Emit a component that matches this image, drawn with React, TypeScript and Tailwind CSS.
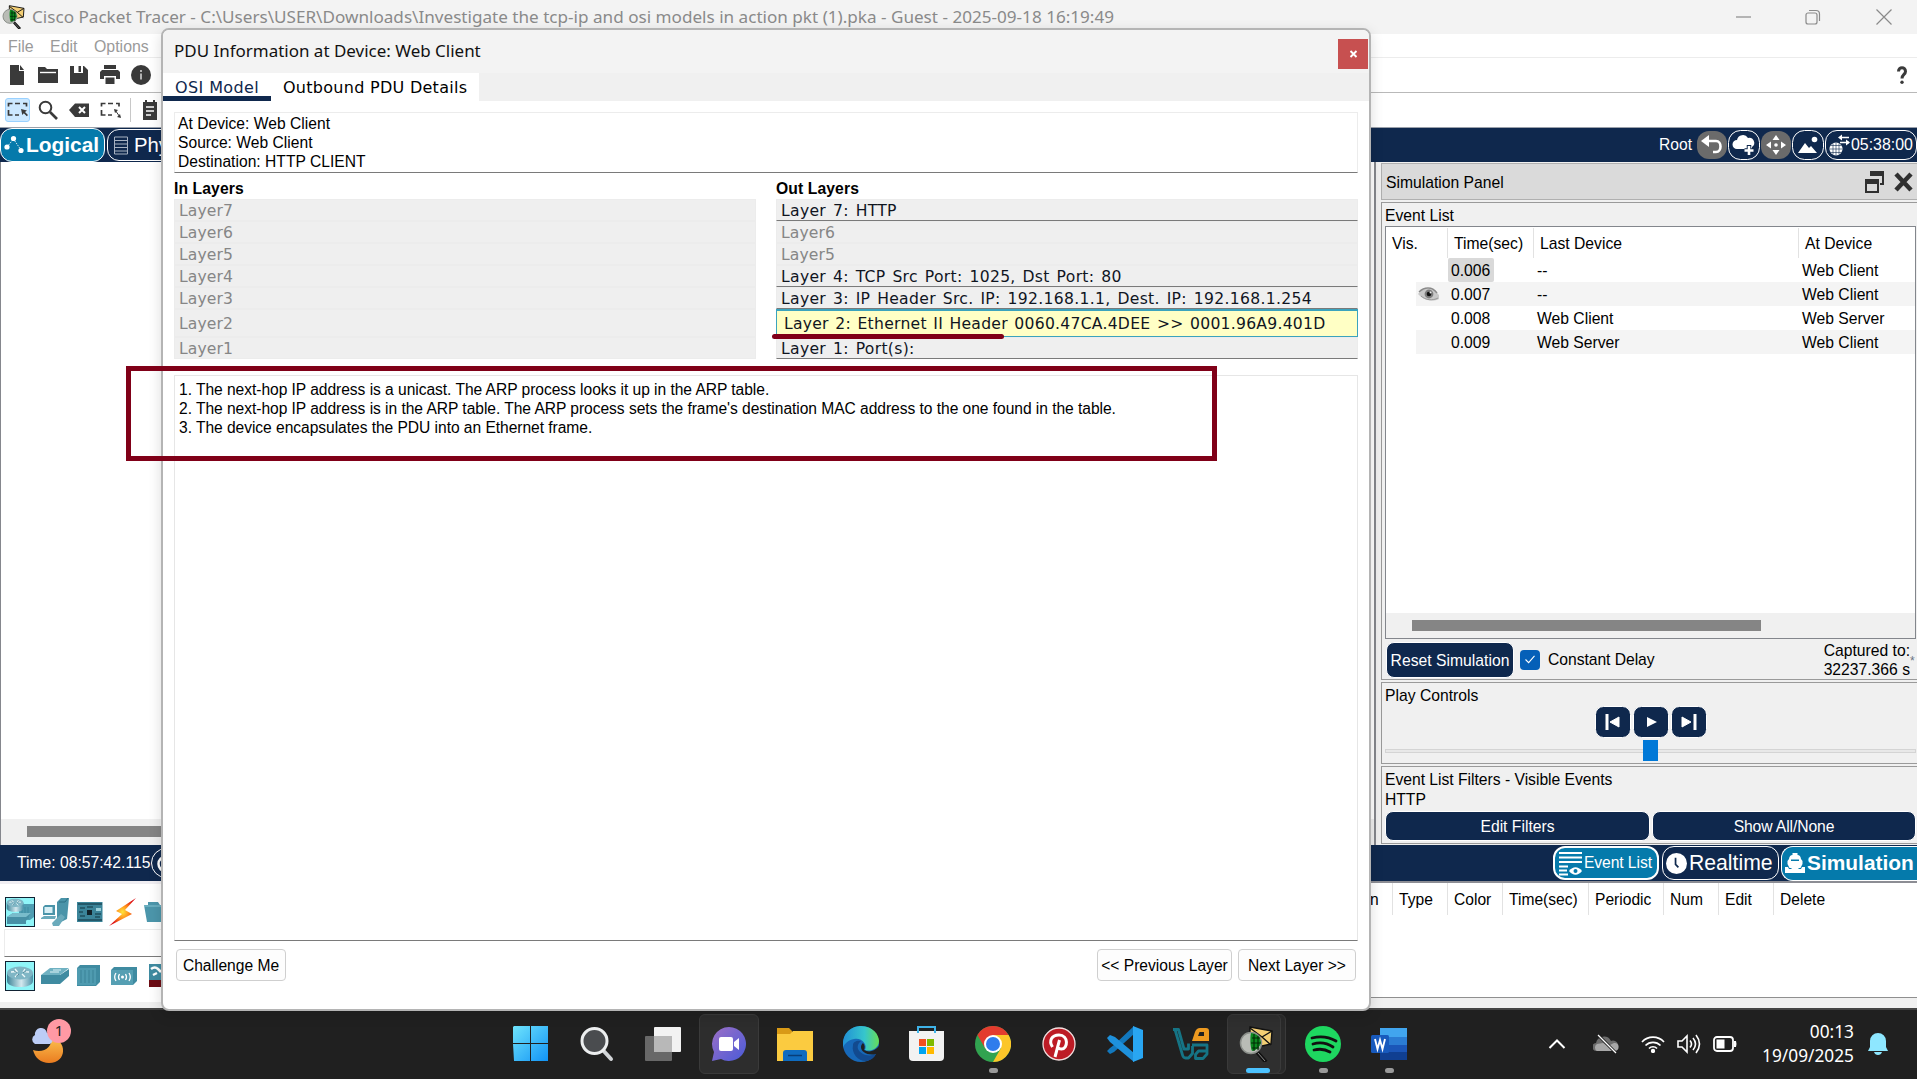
import React from "react";

type P = { className?: string };

const PacketTracerIcon = ({ className }: P) => (
  <svg viewBox="0 0 36 36" className={className}>
    <path d="M11 1l22 4-1 13-9 2-12-8z" fill="#f4cf74" stroke="#111" strokeWidth="1.4" />
    <path d="M11 2l12 9 10-6M23 11l9 8" fill="none" stroke="#111" strokeWidth="1.4" />
    <path d="M18 26l9 10" stroke="#111" strokeWidth="4" />
    <path d="M19 27l7 8" stroke="#8a8a8a" strokeWidth="1" />
    <circle cx="12" cy="17" r="10.5" fill="#b9bcb6" stroke="#8b8f8a" strokeWidth="1.5" />
    <path d="M12 7a10 10 0 0 1 10 9 10 10 0 0 1-9 9c-2-4-2-14-1-18z" fill="#0c8a20" />
    <path d="M13 12h8M12 17h10M13 22h7M15 8v17M19 10v14" stroke="#012a05" strokeWidth="1.1" />
  </svg>
);

const NewFile = () => (
  <svg viewBox="0 0 20 20" className="h-5 w-5"><path d="M3 0h9v6h5v14H3zM13 0l4 5h-4z" fill="#3a3a3a" /></svg>
);
const OpenFile = () => (
  <svg viewBox="0 0 20 20" className="h-5 w-5"><path d="M0 2h7l2 2h11v14H0z" fill="#3a3a3a" /><path d="M2 7.500h16" stroke="#fff" strokeWidth="1.4" /></svg>
);
const SaveFile = () => (
  <svg viewBox="0 0 20 20" className="h-5 w-5"><path d="M1 1h14l4 4v14H1z" fill="#3a3a3a" /><path d="M5 1h9v7H5z" fill="#fff" /><path d="M9.500 1h2.500v6H9.500z" fill="#3a3a3a" /></svg>
);
const PrintFile = () => (
  <svg viewBox="0 0 20 20" className="h-5 w-5"><path d="M4 0h12v4H4zM2 5h16l2 2v7h-4v-3H4v3H0V7zM5.500 12.500h9V19h-9z" fill="#3a3a3a" /></svg>
);
const InfoIcon = () => (
  <svg viewBox="0 0 20 20" className="h-5 w-5"><circle cx="10" cy="10" r="10" fill="#3a3a3a" /><path d="M10 5v2M10 8.500v6" stroke="#ddd" strokeWidth="1.500" /></svg>
);
const SelectIcon = () => (
  <svg viewBox="0 0 22 18" className="h-[18px] w-[22px]">
    <path d="M1.500 5.500V2.500h4M8 2.500h5M16 2.500h3.500v3M1.500 9v5h4M8 14h4" fill="none" stroke="#3a3a3a" strokeWidth="1.700" />
    <path d="M14 8l6 1.500-2 1.500 3 3-1.200 1.200-3-3-1.500 1.800z" fill="#3a3a3a" />
  </svg>
);
const ResizeIcon = () => (
  <svg viewBox="0 0 22 18" className="h-[18px] w-[22px]">
    <path d="M1.500 5.500V2.500h4M8 2.500h5M16 2.500h3v3M1.500 9v5h4M8 14h4" fill="none" stroke="#3a3a3a" strokeWidth="1.700" />
    <path d="M14 8l4 1-3 3zM21 17l-4-1 3-3z" fill="#3a3a3a" /><path d="M15 9l5 7" stroke="#3a3a3a" />
  </svg>
);
const MagnifierIcon = () => (
  <svg viewBox="0 0 20 20" className="h-5 w-5"><circle cx="7.500" cy="7.500" r="5.800" fill="none" stroke="#3a3a3a" strokeWidth="2" /><path d="M12 12l7 7" stroke="#3a3a3a" strokeWidth="2.600" /></svg>
);
const EraseIcon = () => (
  <svg viewBox="0 0 20 20" className="h-5 w-5"><path d="M0 10l6-6.500h14v13.500H6z" fill="#3a3a3a" /><path d="M10 7l6 6M16 7l-6 6" stroke="#fff" strokeWidth="2" /></svg>
);
const NoteIcon = () => (
  <svg viewBox="0 0 16 20" className="h-5 w-4"><path d="M1 2h2V0h2v2h6V0h2v2h2v18H1z" fill="#3a3a3a" /><path d="M4 7h8M4 11h8M4 15h5" stroke="#fff" strokeWidth="1.500" /></svg>
);

function AppHeader() {
  return (
    <>
      <header className="flex h-[34px] shrink-0 items-center bg-[#f3f3f3] pl-[2px]">
        <PacketTracerIcon className="h-[24px] w-[24px]" />
        <h1 className="-mt-px ml-[6px] text-[17.110px] text-[#8a8a8a]">
          Cisco Packet Tracer - C:\Users\USER\Downloads\Investigate the tcp-ip and osi models in action pkt (1).pka - Guest - 2025-09-18 16:19:49
        </h1>
        <svg viewBox="0 0 156 18" className="mr-[25px] ml-auto h-[18px] w-[156px] shrink-0" fill="none" stroke="#8a8a8a" strokeWidth="1.200">
          <path d="M0 9h15" />
          <rect x="70" y="5" width="11" height="11" rx="2" />
          <path d="M73 2.500h7a3.500 3.500 0 0 1 3.500 3.500v7M140.500 1.500l15 15M155.500 1.500l-15 15" />
        </svg>
      </header>
      <nav className="flex h-6 shrink-0 items-center gap-[16.500px] border-b border-[#ececec] bg-white pt-[2px] pl-2 font-['Liberation_Sans'] text-[15.900px] leading-none text-[#9a9a9a]">
        <span>File</span><span>Edit</span><span>Options</span>
      </nav>
      <div className="flex h-[35px] shrink-0 items-center gap-[11px] border-b border-[#b9b9b9] bg-white pl-[7px]">
        <NewFile /><OpenFile /><SaveFile /><PrintFile /><InfoIcon />
        <svg viewBox="0 0 10 18" className="mr-[10px] ml-auto h-[18px] w-[10px]"><path d="M1.500 5.500c0-5 7-5 7 0 0 3-3.500 3-3.500 7" fill="none" stroke="#3a3a3a" strokeWidth="3" /><circle cx="5" cy="16.200" r="1.700" fill="#3a3a3a" /></svg>
      </div>
      <div className="flex h-[34px] shrink-0 items-center bg-white pl-[5px]">
        <div className="flex h-6 w-[25px] items-center justify-center rounded-[3px] border border-[#99d1ff] bg-[#cce8ff]"><SelectIcon /></div>
        <div className="ml-2 flex items-center gap-[11px]"><MagnifierIcon /><EraseIcon /><ResizeIcon /></div>
        <div className="mr-[11px] ml-[8px] h-6 w-px bg-[#c8c8c8]" />
        <NoteIcon />
      </div>
    </>
  );
}

function WorkspaceBar() {
  return (
    <div className="flex h-[35px] shrink-0 items-center border-t border-[#9aa0aa] bg-[#0f284d] font-['Liberation_Sans'] text-white">
      <div className="flex h-[34px] w-[105px] shrink-0 items-center rounded-[12px] border border-white bg-[#057aab] pl-[3px] text-[20.900px] font-bold">
        <svg viewBox="0 0 20 20" className="mr-[2px] h-5 w-5" fill="#fff"><circle cx="3" cy="12" r="2.600" /><circle cx="9.500" cy="3.500" r="2.600" /><circle cx="17" cy="15.500" r="2.600" /><path d="M3 12L9.500 4l7.500 11" fill="none" stroke="#fff" strokeWidth=".8" strokeDasharray="1.500 1" /></svg>
        Logical
      </div>
      <div className="ml-[2px] flex h-[32px] w-[120px] shrink-0 items-center rounded-[12px] border border-white pl-[6px] text-[20.300px]">
        <svg viewBox="0 0 14 18" className="mr-[6px] h-[19px] w-[14px] shrink-0" fill="none" stroke="#a8b2c2"><path d="M.5.5h13v17H.5zM1 4h12M1 7.500h12M1 11h12M1 14.500h12" /></svg>
        Physical
      </div>
      <div className="ml-auto flex items-center text-base">
        <span className="mr-[5px] text-[15.600px]">Root</span>
        <svg viewBox="0 0 30 28" className="h-7 w-[30px]"><rect width="30" height="28" rx="12" fill="#6b6b6b" /><path d="M7 10h12c6 0 6 11 0 11h-3" fill="none" stroke="#fff" strokeWidth="2.600" /><path d="M4 10l8-6v12z" fill="#fff" /></svg>
        <svg viewBox="0 0 32 30" className="ml-px h-[30px] w-8"><rect x=".5" y=".5" width="31" height="29" rx="12" fill="none" stroke="#fff" /><path d="M9 19a4.500 4.500 0 0 1 0-9 6 6 0 0 1 11-2 5 5 0 0 1 4 9v2z" fill="#fff" /><path d="M21 15v11M16.500 20.500h9" stroke="#0f284d" strokeWidth="4.500" /><path d="M21 16v9M16.500 20.500h9" stroke="#fff" strokeWidth="2.600" /></svg>
        <svg viewBox="0 0 30 28" className="ml-px h-7 w-[30px]"><rect width="30" height="28" rx="12" fill="#6b6b6b" /><path d="M15 4l3.500 5h-7zM15 24l3.500-5h-7zM5 14l5-3.500v7zM25 14l-5-3.500v7z" fill="#fff" /><circle cx="15" cy="14" r="1.800" fill="#fff" /></svg>
        <svg viewBox="0 0 32 30" className="ml-px h-[30px] w-8"><rect x=".5" y=".5" width="31" height="29" rx="12" fill="none" stroke="#fff" /><path d="M6 23l7-10 4 5 2-2 6 7z" fill="#fff" /><circle cx="22.500" cy="9.500" r="2.800" fill="#fff" /></svg>
        <div className="ml-px flex h-[30px] w-[92px] items-center rounded-[12px] border border-white pl-[3px] text-[15.900px]">
          <svg viewBox="0 0 21 22" className="mr-px h-[22px] w-[21px] shrink-0"><circle cx="7" cy="15" r="6.500" fill="#fff" /><path d="M1 15h12M2 11.500h10M2 18.500h10M7 8.500v13M4 9.500v11M10 9.500v11" stroke="#0f284d" strokeWidth=".6" /><path d="M11 3.500h9M11 8.500h9" stroke="#fff" strokeWidth="1.500" /><path d="M9 3.500l4-3v6zM21 8.500l-4-3v6z" fill="#fff" /></svg>
          05:38:00
        </div>
      </div>
    </div>
  );
}

const EVENTS = [
  { time: "0.006", last: "--", at: "Web Client", current: true },
  { time: "0.007", last: "--", at: "Web Client", visible: true },
  { time: "0.008", last: "Web Client", at: "Web Server" },
  { time: "0.009", last: "Web Server", at: "Web Client" },
];

const EyeIcon = () => (
  <svg viewBox="0 0 21 14" className="h-[14px] w-[21px]"><path d="M0 7c5-7 15-7 21 1v4c-6 3-15 2-21-5z" fill="#c9c9c9" /><path d="M1 5c5-5 13-6 18 1" fill="none" stroke="#8a8a8a" strokeWidth="1.400" /><path d="M3 9c4 4 12 5 17 2" fill="none" stroke="#999" /><circle cx="11" cy="7" r="4.400" fill="#7d7d7d" /><circle cx="11" cy="7" r="2.300" fill="#111" /><circle cx="12.500" cy="5.500" r="1" fill="#eee" /></svg>
);

function SimulationPanel() {
  return (
    <aside className="flex w-[543px] shrink-0 flex-col border-l-2 border-[#85878d] bg-[#f0f0f0] pl-[5px] font-['Liberation_Sans'] text-[15.700px] leading-[19px] text-black">
      <div className="mt-px flex h-[37px] shrink-0 items-center border border-r-0 border-[#b0b0b0] bg-[#dadada] pl-1">
        <span className="pt-px">Simulation Panel</span>
        <svg viewBox="0 0 48 22" className="mr-[4px] ml-auto h-[22px] w-12"><path d="M5 1h13v12h-3" fill="none" stroke="#303030" strokeWidth="2" /><path d="M5 0h14v5H5z" fill="#303030" /><path d="M1 9h12v12H1z" fill="#dadada" stroke="#303030" strokeWidth="2" /><path d="M0 8h14v5H0z" fill="#303030" /><path d="M31 3l15 16M46 3L31 19" stroke="#303030" strokeWidth="4.500" /></svg>
      </div>
      <section className="mt-[2px] flex h-[478px] shrink-0 flex-col border-t border-b border-l border-[#9a9a9a] pl-[3px]">
        <h2 className="mt-[3px] h-5">Event List</h2>
        <div className="flex h-[413px] w-[531px] shrink-0 flex-col border border-[#83868c] bg-white">
          <div className="flex h-[31px] shrink-0 items-center pt-px">
            <div className="flex h-full w-[62px] items-center border-r border-[#e2e2e2] pl-[6px]">Vis.</div>
            <div className="flex h-full w-[86px] items-center border-r border-[#e2e2e2] pl-[6px]">Time(sec)</div>
            <div className="flex h-full w-[265px] items-center border-r border-[#e2e2e2] pl-[6px]">Last Device</div>
            <div className="pl-[6px]">At Device</div>
          </div>
          {EVENTS.map((e, i) => (
            <div key={e.time} className={i % 2 ? "ml-[30px] flex h-6 shrink-0 items-center bg-[#f4f4f4]" : "ml-[30px] flex h-6 shrink-0 items-center"}>
              <div className="flex w-8 pl-[2px]">{e.visible && <EyeIcon />}</div>
              <div className="w-[86px]">
                <span className={e.current ? "flex h-6 w-[46px] items-center rounded-[2px] bg-[#d9d9d9] pl-[3px]" : "flex h-6 w-[46px] items-center pl-[3px]"}>{e.time}</span>
              </div>
              <div className="w-[265px] pl-[3px]">{e.last}</div>
              <div className="pl-[3px]">{e.at}</div>
            </div>
          ))}
          <div className="mt-auto flex h-[25px] items-center bg-[#f0f0f0] pl-[26px]"><div className="h-[11px] w-[349px] bg-[#858585]" /></div>
        </div>
        <div className="mt-[2px] flex items-center">
          <button className="ml-px h-9 w-[128px] rounded-lg border border-white bg-[#0f284d] tracking-[0.02px] text-white">Reset Simulation</button>
          <span className="mb-px ml-[6px] flex h-5 w-5 items-center justify-center rounded-[4px] bg-[#0560b8]"><svg viewBox="0 0 12 10" className="h-[9px] w-3"><path d="M1 5l3.500 3.500L11 1" fill="none" stroke="#fff" strokeWidth="1.200" /></svg></span>
          <span className="mb-[2px] ml-2 tracking-[-0.050px]">Constant Delay</span>
          <span className="ml-auto w-[98px] text-right whitespace-nowrap">Captured to:<br />32237.366 s</span>
          <span className="mt-[2px] w-[7px] text-xs leading-none text-gray-500">*</span>
        </div>
      </section>
      <section className="mt-[2px] h-[82px] shrink-0 border-t border-b border-l border-[#9a9a9a] pl-[3px]">
        <h2 className="mt-[3px] h-[20px]">Play Controls</h2>
        <div className="flex gap-[2px] pl-[210px]">
          {["M24 11v10l-9-5z", "M14 11v10l10-5z", "M11 11v10l9-5z"].map((d, i) => (
            <svg key={d} viewBox="0 0 36 32" className="h-8 w-9"><rect x=".5" y=".5" width="35" height="31" rx="8" fill="#0f284d" stroke="#fff" /><path d={d} fill="#fff" stroke="#fff" strokeWidth={i === 1 ? 0 : 1} />{i === 0 && <path d="M12 8v16" stroke="#fff" strokeWidth="3" />}{i === 2 && <path d="M24 8v16" stroke="#fff" strokeWidth="3" />}</svg>
          ))}
        </div>
        <div className="mt-[2px] flex h-[21px] w-[531px] items-center">
          <div className="h-1 w-[258px] border border-r-0 border-[#d4d4d4] bg-[#e8e8e8]" /><div className="h-[21px] w-[15px] bg-[#0078d7]" /><div className="h-1 flex-1 border border-l-0 border-[#d4d4d4] bg-[#e8e8e8]" />
        </div>
      </section>
      <section className="mt-[2px] h-[78px] shrink-0 border-t border-b border-l border-[#9a9a9a] pl-[3px]">
        <p className="mt-[3px] leading-[20px] tracking-[-0.020px]">Event List Filters - Visible Events<br />HTTP</p>
        <div className="mt-[1px] flex gap-[2px] text-white">
          <button className="h-[30px] w-[265px] rounded-lg border border-white bg-[#0f284d]">Edit Filters</button>
          <button className="h-[30px] w-[264px] rounded-lg border border-white bg-[#0f284d] tracking-[-0.100px]">Show All/None</button>
        </div>
      </section>
    </aside>
  );
}

function TimeBar() {
  return (
    <div className="flex h-9 shrink-0 items-center bg-[#0f284d] font-['Liberation_Sans'] text-white">
      <span className="ml-[17px] w-[134px] text-[15.700px] whitespace-nowrap">Time: 08:57:42.115</span>
      <svg viewBox="0 0 30 30" className="h-[30px] w-[30px]" fill="none" stroke="#fff"><circle cx="15" cy="15" r="14.500" /><circle cx="15" cy="16" r="7.500" strokeWidth="2.500" /></svg>
      <div className="ml-auto flex h-[34px] w-[106px] items-center rounded-[12px] border-2 border-white bg-[#057aab] pl-[4px] text-[15.700px] tracking-[-0.1px] whitespace-nowrap">
        <svg viewBox="0 0 23 25" className="mr-[2px] h-[25px] w-[23px] shrink-0"><path d="M0 2h23M0 6.500h23M0 11h23M0 15.500h9M0 19.500h8M0 23.500h9" stroke="#fff" strokeWidth="2" /><path d="M10 20c4-5 9-5 13 0-4 5-9 5-13 0z" fill="#fff" /><circle cx="16.500" cy="20" r="2" fill="#057aab" /></svg>
        Event List
      </div>
      <div className="ml-[3px] flex h-[34px] w-[117px] items-center rounded-[12px] border border-white pl-[3px] text-[21.200px]">
        <svg viewBox="0 0 22 22" className="mr-[2px] h-[21px] w-[21px] shrink-0"><circle cx="11" cy="11" r="11" fill="#fff" /><path d="M10 5v7l3 3" fill="none" stroke="#0f284d" strokeWidth="1.800" /></svg>
        Realtime
      </div>
      <div className="ml-[2px] flex h-[35px] w-[136px] items-center rounded-l-[12px] border border-r-0 border-white bg-[#057aab] pl-[3px] text-[20.900px] font-bold">
        <svg viewBox="0 0 20 20" className="mr-[2px] h-5 w-5 shrink-0"><path d="M7.500 0h5v2q3 0 3.500 4l1.500 2v3l-2 4h-11l-2-4V8L4 6q.5-4 3.500-4zM0 14h3l1 2h2l1-1h6l1 1h2l1-2h3v6H0z" fill="#fff" /><path d="M6 6.500h8V8H6z" fill="#057aab" /></svg>
        Simulation
      </div>
    </div>
  );
}

const RouterArt = ({ y = 0, s = 1 }: { y?: number; s?: number }) => (
  <g transform={`translate(1 ${y}) scale(${s})`}>
    <path d="M1 9v8c0 8 26 8 26 0V9z" fill="url(#metal)" /><ellipse cx="14" cy="9" rx="13" ry="6.500" fill="#7fb6c5" />
    <path d="M5 8l6-.5M9 5l2.500 3M23 8l-5-.3M19 5l-2 3M9 13l3-3M19 13l-3-3" stroke="#f0fafb" strokeWidth="1.300" />
    <path d="M8 7l3 1.500M20 7l-3 1.500M10 12.500l3-2.500" stroke="#2b6c80" strokeWidth=".7" />
  </g>
);

function DevicePalette() {
  return (
    <div className="flex w-[170px] shrink-0 flex-col border-t-[3px] border-[#f0eef2] bg-white">
      <div className="mt-3 flex h-[31px] items-center overflow-hidden pl-[5px] [&>svg]:shrink-0">
        <svg viewBox="0 0 30 30" className="h-[30px] w-[30px]">
          <defs><linearGradient id="metal"><stop stopColor="#3a8297" /><stop offset=".55" stopColor="#d3e8ee" /><stop offset="1" stopColor="#4b92a8" /></linearGradient></defs>
          <rect x=".5" y=".5" width="29" height="29" fill="#8ff5f8" stroke="#123" /><path d="M14 10l5-3h10v13l-4 3H14z" fill="#4f9db2" /><path d="M17 10v12M20 10v12M23 10v12" stroke="#3f8ba0" /><RouterArt y={0} s={0.65} /><path d="M2 20l6-4h18l-5 8v3H2z" fill="#4790a5" /><path d="M2 20l6-4h18l-5 4H2z" fill="#79bccb" />
        </svg>
        <svg viewBox="0 0 28 28" className="ml-[6px] h-7 w-7"><path d="M16 4l4-4h8l-2 21-6 3h-4z" fill="#4a94a9" /><path d="M18 4h6l3-4" stroke="#2d7185" fill="none" /><path d="M2 9l2-2h10v10H2z" fill="#4a94a9" /><path d="M3.500 9h8v6h-8z" fill="#d8eff5" /><path d="M0 20l3-2h12l-1 3H0zM11 25l9-9 4 3-6 9h-6z" fill="#6aaabb" /></svg>
        <svg viewBox="0 0 26 20" className="ml-2 h-5 w-[26px]"><rect width="25.500" height="20" fill="#3b8499" /><path d="M1 2h24M1 18h24" stroke="#24596a" strokeWidth="2" /><path d="M3 6h5M2 10h4M3 14h5M18 12h6M18 15h5M10 5h6" stroke="#1f4f5e" strokeWidth="1.300" /><rect x="10" y="8" width="5" height="5" fill="#122229" /><path d="M19 6h5v3h-5z" fill="#9ad0da" /></svg>
        <svg viewBox="0 0 28 28" className="ml-[6px] h-7 w-7"><defs><radialGradient id="bolt"><stop stopColor="#ffe53c" /><stop offset=".5" stopColor="#ff8a1a" /><stop offset="1" stopColor="#dd1014" /></radialGradient></defs><path d="M27 0L7 13l6 3L0 28l23-12-7-4z" fill="url(#bolt)" /></svg>
        <svg viewBox="0 0 28 20" className="ml-[7px] h-5 w-7"><path d="M0 3h4V0h10l2 3h12v17H3z" fill="#4c96ab" /><path d="M0 4h28" stroke="#84c5d3" /></svg>
      </div>
      <div className="mt-[2px] ml-1 h-[28px] border border-r-0 border-[#ececec] border-b-[#7a7a7a]" />
      <div className="mt-[3px] flex h-[31px] items-center overflow-hidden pl-[5px] [&>svg]:shrink-0">
        <svg viewBox="0 0 30 30" className="h-[30px] w-[30px]"><rect x=".5" y=".5" width="29" height="29" fill="#8ff5f8" stroke="#123" /><RouterArt y={3} /></svg>
        <svg viewBox="0 0 28 16" className="ml-[6px] h-4 w-7"><path d="M0 7h19l9-6v7l-9 8H0z" fill="#3f8ba1" /><path d="M0 7l9-7h19l-9 7z" fill="#6fb1c2" /><path d="M9 4h9M12 2h8" stroke="#dff3f7" /></svg>
        <svg viewBox="0 0 24 21" className="ml-2 h-[21px] w-6"><path d="M0 3l3-3h20v17l-4 4H0z" fill="#3f8ba1" /><path d="M0 3h19v17H0z" fill="#4f9bb0" /><path d="M4 5v13M8 5v13M12 5v13M16 5v13" stroke="#3a8297" /></svg>
        <svg viewBox="0 0 26 18" className="ml-[10px] h-[18px] w-[26px]"><path d="M0 3l3-3h23v14l-4 4H0z" fill="#3f8ba1" /><path d="M0 3h22v15H0z" fill="#559fb3" /><circle cx="11.500" cy="10" r="1.500" fill="#fff" /><path d="M8.500 7q-2 3 0 6M14.500 7q2 3 0 6M5 6c-2 3-2 5 0 8M18 6c2 3 2 5 0 8" fill="none" stroke="#fff" strokeWidth="1.300" /></svg>
        <svg viewBox="0 0 24 23" className="ml-[12px] h-[23px] w-6"><path d="M0 0h24v16H0z" fill="#3f8ba1" /><path d="M0 16h24v7H0z" fill="#6d0d14" /><path d="M2 5q4-3 7 0l3 3M4 11l4-2" fill="none" stroke="#fff" strokeWidth="2.500" /></svg>
      </div>
      <div className="mt-auto h-[6px] bg-[#f0f0f0]" />
    </div>
  );
}

function ScenarioTable() {
  return (
    <div className="ml-auto flex w-[547px] flex-col border-t-2 border-[#8c8d94] bg-white font-['Liberation_Sans'] text-[15.600px] text-black">
      <div className="flex h-[32px] items-center [&>div]:flex [&>div]:h-full [&>div]:items-center [&>div]:border-r [&>div]:border-[#e2e2e2] [&>div]:pt-[2px] [&>div]:pl-[6px]">
        <div className="w-[23px] !pl-0">n</div><div className="w-[55px]">Type</div><div className="w-[55px]">Color</div><div className="w-[86px]">Time(sec)</div>
        <div className="w-[75px]">Periodic</div><div className="w-[55px]">Num</div><div className="w-[55px]">Edit</div><span className="pt-[2px] pl-[6px]">Delete</span>
      </div>
      <div className="mt-auto h-[11px] border-t border-[#8f8f8f] bg-[#f0f0f0]" />
    </div>
  );
}

const LayerRow = ({ text, disabled, tall }: { text: string; disabled?: boolean; tall?: boolean }) => {
  if (tall && !disabled)
    return <div className="flex h-7 items-center border border-t-2 border-[#3ba3bd] bg-[#ffffc5] pt-[2px] pl-[7px] tracking-[0.260px] [word-spacing:1.300px] text-[#10151f]">{text}</div>;
  if (disabled) return <div className={tall ? "flex h-7 items-center border border-[#ececec] pt-[3px] pl-[4px] text-[#868686]" : "flex h-[22px] items-center border border-[#ececec] pt-[3px] pl-[4px] text-[#868686]"}>{text}</div>;
  return <div className="flex h-[22px] items-center border border-[#ececec] border-b-[#7a7a7a] pt-[3px] pl-[4px] tracking-[0.320px] [word-spacing:1.600px] text-[#10151f]">{text}</div>;
};

const OUT_LAYERS = [
  { text: "Layer 7: HTTP" },
  { text: "Layer6", disabled: true },
  { text: "Layer5", disabled: true },
  { text: "Layer 4: TCP Src Port: 1025, Dst Port: 80" },
  { text: "Layer 3: IP Header Src. IP: 192.168.1.1, Dest. IP: 192.168.1.254" },
  { text: "Layer 2: Ethernet II Header 0060.47CA.4DEE >> 0001.96A9.401D", tall: true },
  { text: "Layer 1: Port(s):" },
];

function PduDialog() {
  return (
    <div className="absolute top-[28px] left-[161px] flex h-[983px] w-[1210px] flex-col overflow-hidden rounded-[8px] border-2 border-[#b4b4b4] bg-white font-['Liberation_Sans'] text-[15.600px] text-black shadow-[0_4px_14px_rgba(0,0,0,0.14)]">
      <div className="flex h-[43px] shrink-0 items-center bg-[#f3f3f3] pl-[11px]">
        <h2 className="-mt-[2px] font-['Noto_Sans'] text-[16.980px] text-[#111]">PDU Information at Device: Web Client</h2>
        <button className="mt-[5px] mr-px ml-auto flex h-[30px] w-[30px] items-center justify-center bg-[#c75050]"><svg viewBox="0 0 8 8" className="h-2 w-[9px]"><path d="M1 1l6 6M7 1L1 7" stroke="#fff" strokeWidth="1.900" /></svg></button>
      </div>
      <div className="flex h-[28px] shrink-0 bg-[#f0f0f0] font-['DejaVu_Sans'] text-[16px]">
        <div className="flex h-[28px] w-[108px] items-center border-b-[5px] border-[#0f284d] bg-white pt-[6px] pl-[12px] tracking-[0.400px] text-[#0f284d]">OSI Model</div>
        <div className="flex w-[208px] items-center bg-white pt-[2px] pl-[12px] tracking-[0.280px] whitespace-nowrap">Outbound PDU Details</div>
      </div>
      <div className="mt-[11px] ml-[11px] flex h-[61px] w-[1184px] shrink-0 flex-col justify-center border border-[#ececec] border-b-[#7a7a7a] pl-[3px] leading-[19px] tracking-[0.030px]">
        <p>At Device: Web Client</p><p>Source: Web Client</p><p>Destination: HTTP CLIENT</p>
      </div>
      <div className="mt-[6px] ml-[11px] flex shrink-0 gap-5">
        <div className="w-[582px]">
          <h3 className="h-5 text-[15.700px] leading-5 font-bold tracking-[0.100px]">In Layers</h3>
          <div className="bg-[#efefef] font-['DejaVu_Sans'] text-[15.600px] tracking-[0.100px]">{[7, 6, 5, 4, 3, 2, 1].map((n) => <LayerRow key={n} text={`Layer${n}`} disabled tall={n === 2} />)}</div>
        </div>
        <div className="w-[582px]">
          <h3 className="h-5 text-[15.700px] leading-5 font-bold tracking-[0.100px]">Out Layers</h3>
          <div className="bg-[#efefef] font-['DejaVu_Sans'] text-[15.600px] tracking-[0.100px]">{OUT_LAYERS.map((l) => <LayerRow key={l.text} {...l} />)}</div>
        </div>
      </div>
      <div className="mt-[16px] ml-[11px] h-[566px] w-[1184px] shrink-0 border border-[#e6e6e6] border-b-[#7a7a7a] pt-[4px] pl-[4px] leading-[19px] tracking-[-0.045px]">
        <p>1. The next-hop IP address is a unicast. The ARP process looks it up in the ARP table.</p>
        <p>2. The next-hop IP address is in the ARP table. The ARP process sets the frame's destination MAC address to the one found in the table.</p>
        <p>3. The device encapsulates the PDU into an Ethernet frame.</p>
      </div>
      <div className="mt-2 flex h-8 shrink-0 gap-[6px] pr-[13px] pl-[13px] [&>button]:rounded-[4px] [&>button]:border [&>button]:border-[#cfcfcf] [&>button]:bg-[#fdfdfd] [&>button]:pt-[2px]">
        <button className="mr-auto w-[110px]">Challenge Me</button>
        <button className="w-[135px] whitespace-nowrap">&lt;&lt; Previous Layer</button>
        <button className="w-[118px]">Next Layer &gt;&gt;</button>
      </div>
    </div>
  );
}

const Tile = ({ children, active, dot }: { children: React.ReactNode; active?: boolean; dot?: boolean }) => (
  <div className={active ? "relative mx-[3px] flex h-[60px] w-[60px] items-center justify-center rounded-[6px] border border-[#3a3a3a] bg-[#2d2d2d]" : "relative mx-[3px] flex h-[60px] w-[60px] items-center justify-center"}>
    <svg viewBox="0 0 36 36" className="h-9 w-9">{children}</svg>
    {dot && <span className="absolute bottom-[1px] h-[5px] w-[9px] rounded-full bg-[#9a9a9a]" />}
  </div>
);

function Taskbar() {
  return (
    <div className="flex h-[71px] shrink-0 items-center border-t-2 border-[#454545] bg-[#202020] pb-[2px] font-['Noto_Sans'] text-white">
      <div className="relative ml-[30px] h-[46px] w-[42px]">
        <svg viewBox="0 0 42 46" className="h-[46px] w-[42px]">
          <defs><linearGradient id="moon" x1="0" y1="0" x2="0" y2="1"><stop stopColor="#fbc04f" /><stop offset="1" stopColor="#ea7c20" /></linearGradient></defs>
          <path d="M3 29c11 4 20-4 18-12 16 1 17 25-2 25-8 0-14-5-16-13z" fill="url(#moon)" />
          <path d="M5 23a5 5 0 0 1 0-9 6 6 0 0 1 12-2 6 6 0 0 1 3 11z" fill="#bccdf6" />
        </svg>
        <span className="absolute top-[-2px] right-[1px] flex h-6 w-6 items-center justify-center rounded-full bg-[#ff99a4] text-[15px] text-[#222]">1</span>
      </div>
      <div className="ml-[426px] flex items-center">
        <Tile><defs><linearGradient id="win" x1="0" y1="0" x2="1" y2="1"><stop stopColor="#6fe4fc" /><stop offset="1" stopColor="#1193f5" /></linearGradient></defs><path d="M1 0h16v17H0V1zM18 0h17v17H18zM0 18h17v17H1zM18 18h17v17H18z" fill="url(#win)" /></Tile>
        <Tile><path d="M22 22l10 11" stroke="#d2d5d8" strokeWidth="4" strokeLinecap="round" /><circle cx="15.500" cy="15" r="12.500" fill="#4a4c4f" stroke="#eceeef" strokeWidth="3" /></Tile>
        <Tile><rect y="10" width="27" height="25" rx="1" fill="#686868" /><rect x="9" y="1" width="27" height="25" rx="1" fill="#f2f2f2" /><rect x="9" y="10" width="18" height="16" fill="#b8b8b8" /></Tile>
        <Tile active><defs><linearGradient id="chat" x1="0" y1="0" x2="1" y2="1"><stop stopColor="#9c6fc6" /><stop offset="1" stopColor="#4a5bd8" /></linearGradient></defs><path d="M18 1a17 17 0 1 1-8 32l-9 2 2-9A17 17 0 0 1 18 1z" fill="url(#chat)" /><rect x="8" y="11" width="14" height="14" rx="2" fill="#fff" /><path d="M23 16l5-4v12l-5-4z" fill="#fff" /></Tile>
        <Tile><path d="M0 2h12l3 3v6H0z" fill="#d99a16" /><path d="M0 8h13l3-3h20v30H0z" fill="#fbcb40" /><path d="M6 35V27q0-3 3-3h18q3 0 3 3v8z" fill="#0f6cc0" /><path d="M11 29.500h14" stroke="#083e78" strokeWidth="1.500" /></Tile>
        <Tile><defs><linearGradient id="edge"><stop stopColor="#2190d6" /><stop offset=".6" stopColor="#36c6cc" /><stop offset="1" stopColor="#66dd58" /></linearGradient></defs><circle cx="18" cy="18" r="18" fill="#1768b8" /><path d="M0 18C0 4 12 0 18 0c12 0 18 9 18 15 0 8-9 11-14 9 3-6-4-13-11-11C5 14 1 18 0 22z" fill="url(#edge)" /><path d="M10 19c-2 9 6 17 14 16 4-1 7-3 9-7-7 3-15 1-18-5-1-4 1-6 3-8-4-1-8 1-8 4z" fill="#124a8f" /><path d="M20 17c2 2 2 5 1 7 5 3 11 1 15-4v8l-3 0c-8 2-15-2-15-7 0-2 1-3 2-4z" fill="#202020" /></Tile>
        <Tile><path d="M9 6V1h17v5" fill="none" stroke="#3fb3e8" strokeWidth="2" /><path d="M0 5h35v26q0 4-4 4H4q-4 0-4-4z" fill="#f2f2f2" /><path d="M9 7V3M26 7V3" stroke="#3fb3e8" strokeWidth="2" /><path d="M10 13h7v7h-7z" fill="#f25022" /><path d="M18 13h7v7h-7z" fill="#7fba00" /><path d="M10 21h7v7h-7z" fill="#00a4ef" /><path d="M18 21h7v7h-7z" fill="#ffb900" /></Tile>
        <Tile dot><circle cx="18" cy="18" r="18" fill="#31a350" /><path d="M2.400 9A18 18 0 0 1 33.600 9L18 9.500 10 22z" fill="#e33b2e" /><path d="M33.600 9A18 18 0 0 1 18 36l8-14-1-8-7-5z" fill="#fcc629" /><circle cx="18" cy="18" r="9" fill="#fff" /><circle cx="18" cy="18" r="7" fill="#2f7cec" /></Tile>
        <Tile><circle cx="18" cy="18" r="16" fill="#bd1c26" stroke="#f2dede" strokeWidth="1.300" /><path d="M11.500 21c-4-6-1-12 6.500-12 10 0 9 14 2.500 14-2 0-3-1-3-2M18.500 14l-4.500 17" fill="none" stroke="#fff" strokeWidth="3" /></Tile>
        <Tile><path d="M27 0L7 19 3 22 0 25l3 3 4-2L27 8z" fill="#1278bd" /><path d="M0 12l3-3 5 2 19 16v9L3 16z" fill="#1e91dc" /><path d="M26 0l10 4v28l-10 4z" fill="#29a6f2" /></Tile>
        <Tile><path d="M0 3.500h5.500L11 23h4.500v-5.500M2 3.500L9.500 29q.8 3 3 3h3l4-4.500V20M19 19h15v4.500M34 23v5l-4 4.500h-7.500v-4l3-3.500h8" fill="none" stroke="#157485" strokeWidth="2.800" strokeLinejoin="round" /><path d="M19 15l3-9q1.500-4 5-4h6q3 0 3 3v10zM26.500 6l-1.500 4h6V6z" fill="#ee9a20" fillRule="evenodd" /></Tile>
        <div className="relative mx-[3px] flex h-[60px] w-[60px] items-center">
          <div className="absolute right-[1px] h-[60px] w-[30px] rounded-[6px] border border-[#3a3a3a] bg-[#2a2a2a]" />
          <div className="relative flex h-[60px] w-[54px] items-center justify-center rounded-[6px] border border-[#3a3a3a] bg-[#2f2f2f]"><PacketTracerIcon className="ml-1.5 h-9 w-9" /><span className="absolute bottom-0 ml-2 h-[5px] w-6 rounded-full bg-[#4cc2ff]" /></div>
        </div>
        <Tile dot><circle cx="18" cy="18" r="18" fill="#1ed760" /><path d="M7 12c8-2 17-1 24 3M8 18c7-2 14-1 20 3M9 24c6-1.500 11-1 16 2" fill="none" stroke="#111" strokeWidth="2.800" strokeLinecap="round" /></Tile>
        <Tile dot><path d="M9 2h27v32H9z" fill="#1b56b8" /><path d="M9 2h27v9H9z" fill="#41a5ee" /><path d="M9 11h27v8H9z" fill="#2b7cd3" /><path d="M9 26h27v8H9z" fill="#103f91" /><rect y="9" width="18" height="18" rx="1.500" fill="#185abd" /><path d="M4 13l2.500 10L9 14l2.500 9L14 13" fill="none" stroke="#fff" strokeWidth="1.900" /></Tile>
      </div>
      <div className="ml-auto flex items-center">
        <svg viewBox="0 0 18 12" className="h-3 w-[18px]"><path d="M1.500 10L9 2.500l7.500 7.500" fill="none" stroke="#fff" strokeWidth="2" /></svg>
        <svg viewBox="0 0 26 20" className="ml-[27px] h-5 w-[26px]"><path d="M4 17a4 4 0 0 1-1-8 8 8 0 0 1 15-2 5 5 0 0 1 4 10z" fill="#6d6d6d" /><path d="M4 17a4 4 0 0 1 0-7l6-1 5 3 6-3a4 4 0 0 1 1 8z" fill="#a8a8a8" /><path d="M5 1l18 18" stroke="#202020" strokeWidth="3" /><path d="M5 1l18 18" stroke="#fff" strokeWidth="1.300" /></svg>
        <svg viewBox="0 0 24 18" className="ml-[22px] h-[18px] w-6" fill="none" stroke="#fff" strokeWidth="1.700"><path d="M1 7a15 15 0 0 1 22 0M4.500 10.500a10.500 10.500 0 0 1 15 0M8 13.500a5.500 5.500 0 0 1 8 0" /><circle cx="12" cy="16" r="1.300" fill="#fff" /></svg>
        <svg viewBox="0 0 24 20" className="ml-3 h-5 w-6" fill="none" stroke="#fff" strokeWidth="1.600"><path d="M1 7h4l5-5v16l-5-5H1zM13 6.500q3 3.500 0 7M16 4q5 6 0 12M19 1q7 9 0 18" /></svg>
        <svg viewBox="0 0 24 16" className="ml-3 h-4 w-6"><rect x="1" y="1" width="19" height="14" rx="3" fill="none" stroke="#fff" strokeWidth="1.800" /><path d="M3.500 3.500h8v9h-8zM21 5h2q1 3 0 6h-2z" fill="#fff" /></svg>
        <div className="ml-[25px] text-right text-[17.300px] leading-6"><p>00:13</p><p>19/09/2025</p></div>
        <svg viewBox="0 0 20 24" className="mr-[29px] ml-[14px] h-6 w-5"><path d="M10 1a8 8 0 0 1 8 8v6l2 4H0l2-4V9a8 8 0 0 1 8-8zM6 20h8q-1 3-4 3t-4-3z" fill="#8ee7ff" /></svg>
      </div>
    </div>
  );
}

export default function App() {
  return (
    <div className="relative flex h-[1079px] w-[1917px] flex-col overflow-hidden bg-white font-['Noto_Sans',sans-serif] whitespace-nowrap">
      <AppHeader />
      <WorkspaceBar />
      <div className="flex h-[683px] shrink-0 border-l border-[#85878d]">
        <div className="flex flex-1 flex-col justify-end bg-white"><div className="flex h-[26px] items-center bg-[#f0f0f0] pb-[2px] pl-[26px]"><div className="h-[11px] w-[800px] bg-[#858585]" /></div></div>
        <SimulationPanel />
      </div>
      <TimeBar />
      <div className="flex h-[127px] shrink-0"><DevicePalette /><ScenarioTable /></div>
      <Taskbar />
      <PduDialog />
      <div className="absolute top-[334px] left-[772px] h-[5px] w-[232px] rounded-full bg-[#800018]" />
      <div className="absolute top-[366px] left-[126px] h-[95px] w-[1091px] border-[5px] border-[#800018]" />
    </div>
  );
}
